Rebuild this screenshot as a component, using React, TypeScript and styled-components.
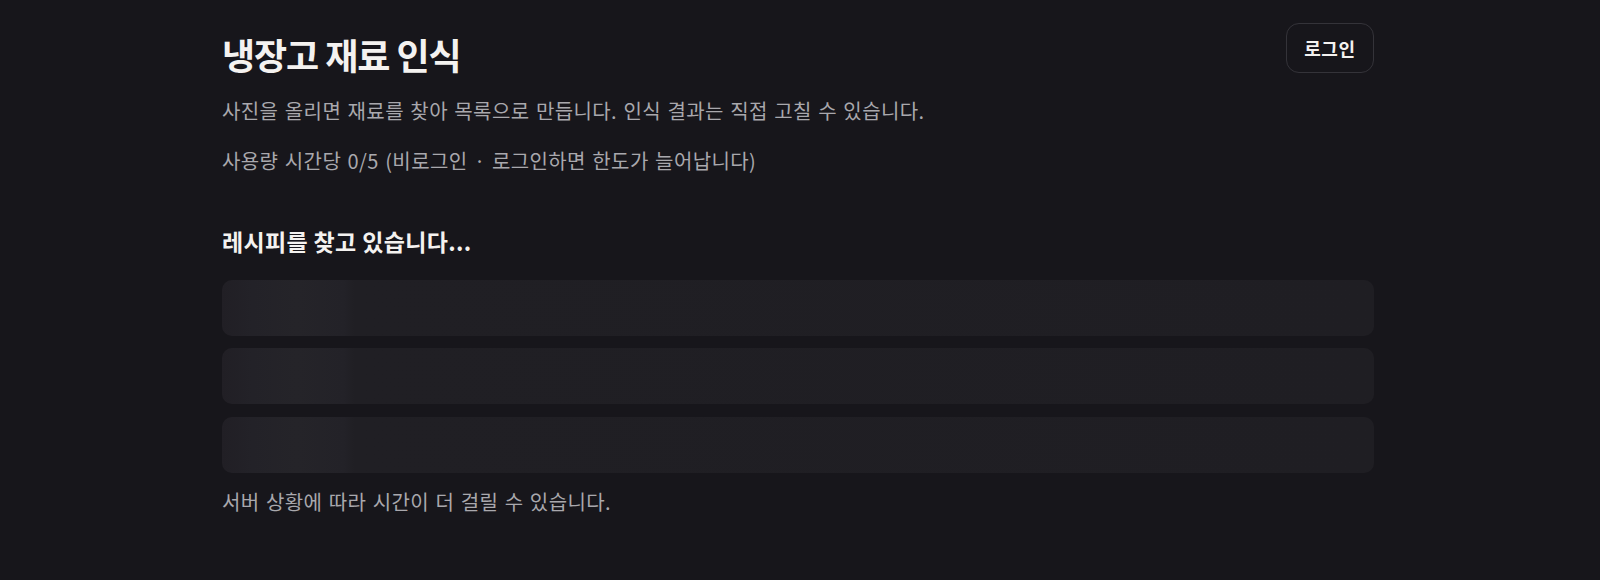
import React from "react";
import styled, { createGlobalStyle } from "styled-components";

const GlobalStyle = createGlobalStyle`
  html, body {
    margin: 0;
    padding: 0;
    background: #17161b;
  }
  body {
    font-family: "Noto Sans CJK KR", "Noto Sans", sans-serif;
    color: #f2f0f0;
  }
`;

const Page = styled.main`
  min-height: 580px;
  background: #17161b;
  padding: 23px 0 40px;
  box-sizing: border-box;
`;

const Container = styled.div`
  width: 1152px;
  margin: 0 auto;
  padding-right: 4px;
  display: flex;
  flex-direction: column;
`;

const HeaderRow = styled.header`
  display: flex;
  justify-content: space-between;
  align-items: flex-start;
`;

const Intro = styled.div`
  display: flex;
  flex-direction: column;
`;

const Title = styled.h1`
  margin: 8.5px 0 0;
  font-size: 36px;
  line-height: 44px;
  font-weight: 700;
  letter-spacing: -0.03em;
  color: #f4f2f0;
`;

const Lead = styled.p<{ $top: number }>`
  margin: ${(p) => p.$top}px 0 0;
  font-size: 20px;
  line-height: 28px;
  font-weight: 400;
  color: #a9a8ad;
  letter-spacing: 0.02em;
  word-spacing: 1.5px;
`;

const LoginButton = styled.button`
  height: 50px;
  padding: 0 17.5px;
  border-radius: 13px;
  border: 1px solid #343339;
  background: transparent;
  color: #f4f2f0;
  font-family: inherit;
  font-size: 18px;
  font-weight: 700;
  letter-spacing: 0.03em;
  cursor: pointer;
`;

const Section = styled.section`
  margin-top: 50px;
  display: flex;
  flex-direction: column;
`;

const SectionTitle = styled.h2`
  margin: 0 0 23.3px;
  font-size: 23px;
  line-height: 32px;
  font-weight: 700;
  color: #f4f2f0;
  letter-spacing: 0.015em;
`;

const SkeletonList = styled.div`
  display: flex;
  flex-direction: column;
  gap: 12.65px;
`;

const SkeletonRow = styled.div`
  height: 56px;
  border-radius: 10px;
  background: linear-gradient(
    90deg,
    #211f25 0px,
    #232228 30px,
    #252429 75px,
    #232228 122px,
    #201f24 132px,
    #1f1e23 100%
  );
`;

const Note = styled.p`
  margin: 14.5px 0 0;
  font-size: 20px;
  line-height: 28px;
  color: #a9a8ad;
  letter-spacing: 0.02em;
  word-spacing: 1.5px;
`;

export default function App() {
  return (
    <>
      <GlobalStyle />
      <Page>
        <Container>
          <HeaderRow>
            <Intro>
              <Title>냉장고 재료 인식</Title>
              <Lead $top={21}>
                사진을 올리면 재료를 찾아 목록으로 만듭니다. 인식 결과는 직접 고칠 수 있습니다.
              </Lead>
              <Lead $top={22}>사용량 시간당 0/5 (비로그인 · 로그인하면 한도가 늘어납니다)</Lead>
            </Intro>
            <LoginButton type="button">로그인</LoginButton>
          </HeaderRow>
          <Section>
            <SectionTitle>레시피를 찾고 있습니다...</SectionTitle>
            <SkeletonList>
              <SkeletonRow />
              <SkeletonRow />
              <SkeletonRow />
            </SkeletonList>
            <Note>서버 상황에 따라 시간이 더 걸릴 수 있습니다.</Note>
          </Section>
        </Container>
      </Page>
    </>
  );
}
